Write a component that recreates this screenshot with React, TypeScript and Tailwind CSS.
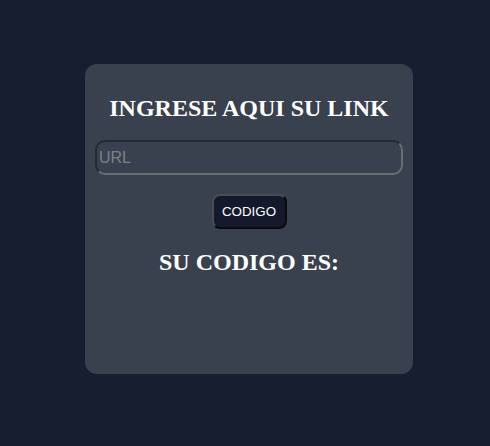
export default function App() {
  return (
    <div className="flex min-h-[446px] w-full items-start justify-center bg-[#171e30] pl-[8px] pt-[64px]">
      <div className="flex h-[310px] w-[328px] flex-col items-center rounded-[12px] bg-[#3a414e] px-[10px] pt-[29px]">
        <h2 className="font-['Liberation_Serif',serif] text-[24px] font-bold leading-[30px] text-white">
          INGRESE AQUI SU LINK
        </h2>
        <input
          type="text"
          placeholder="URL"
          className="mt-[17px] h-[35px] w-full rounded-[10px] border-2 border-b-[#6b6e73] border-l-[#26292f] border-r-[#6b6e73] border-t-[#26292f] bg-transparent px-[2px] font-['Liberation_Sans',sans-serif] text-[16px] text-white outline-none placeholder:text-[#7c8088]"
        />
        <button className="mt-[19px] h-[35px] w-[75px] rounded-[8px] border-2 border-b-[#0a0a0a] border-l-[#4a4d52] border-r-[#0a0a0a] border-t-[#4a4d52] bg-[#141a2c] font-['Liberation_Sans',sans-serif] text-[13.33px] text-white">
          CODIGO
        </button>
        <h2 className="mt-[18px] font-['Liberation_Serif',serif] text-[24px] font-bold leading-[30px] text-white">
          SU CODIGO ES:
        </h2>
      </div>
    </div>
  );
}
